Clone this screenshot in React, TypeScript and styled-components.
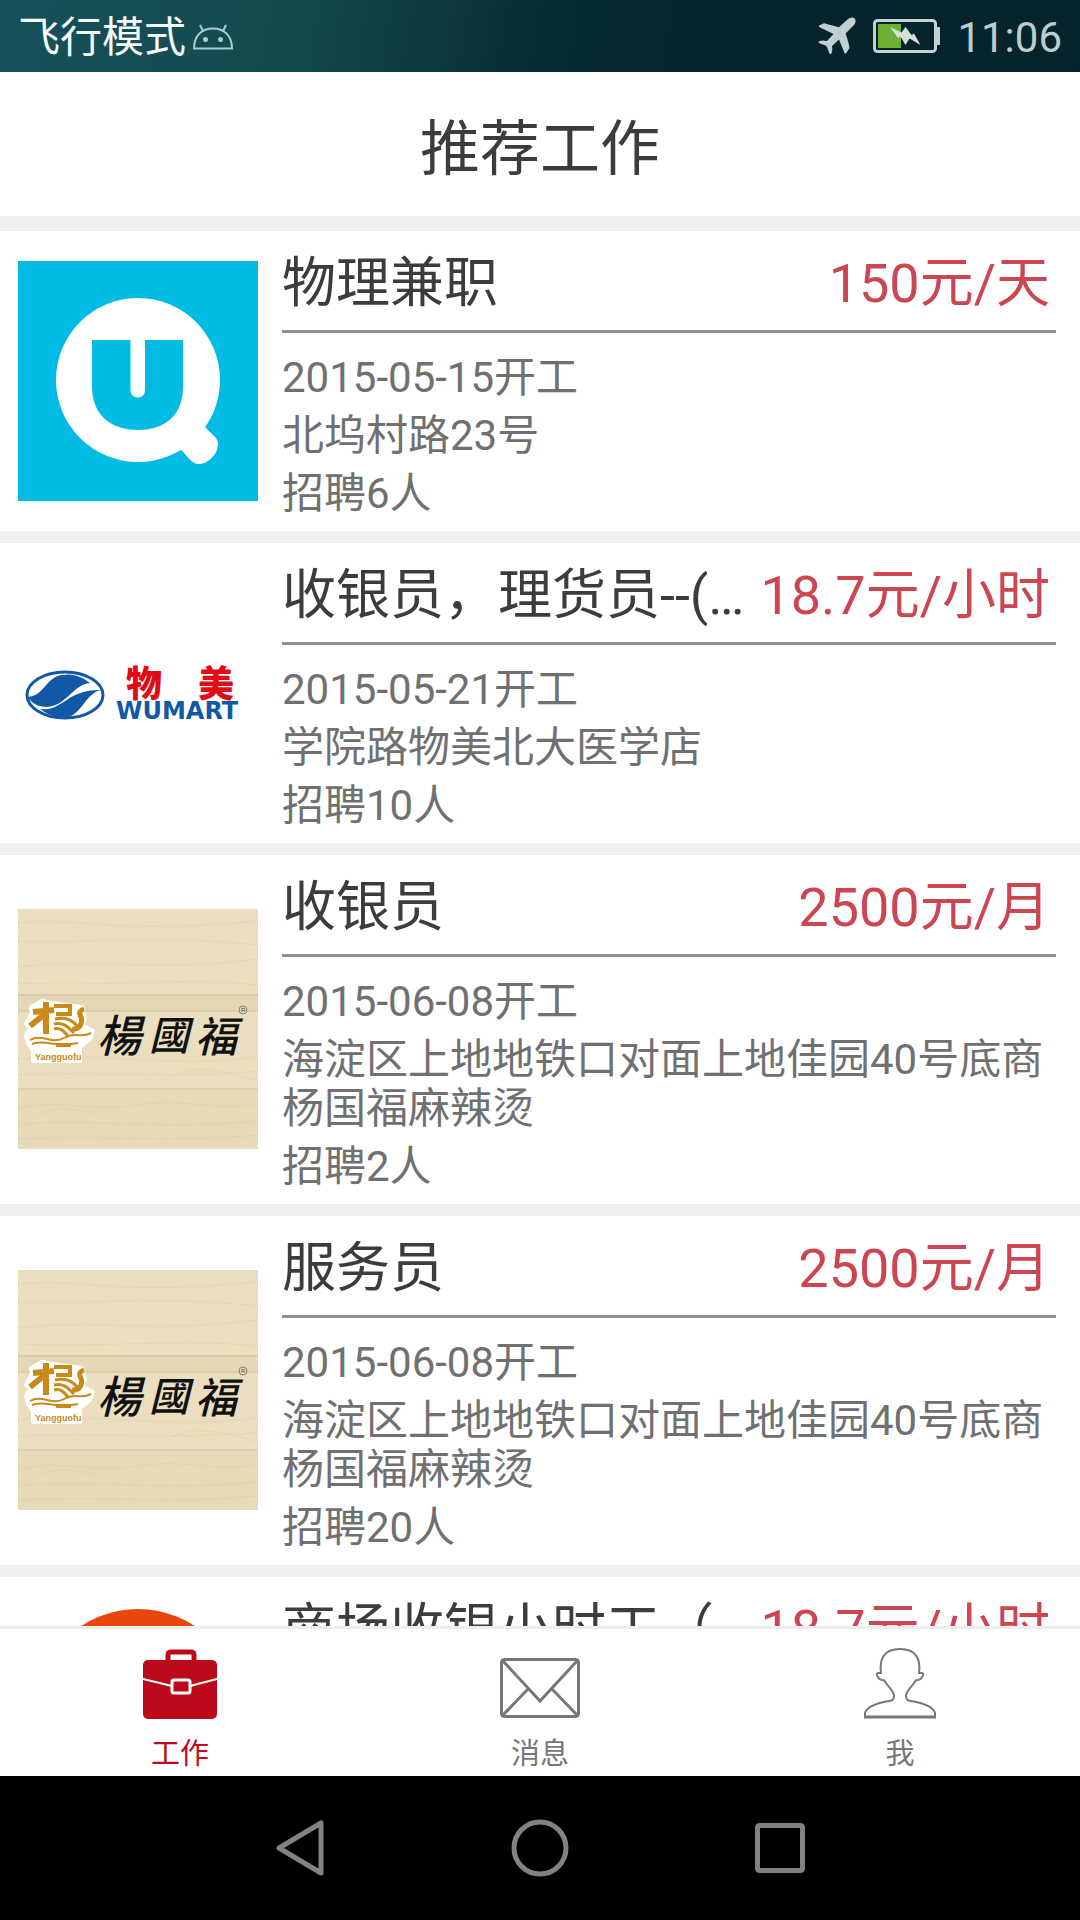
import React from "react";
import styled, { createGlobalStyle } from "styled-components";

const GlobalStyle = createGlobalStyle`
  * { box-sizing: border-box; }
  html, body, #root { height: 100%; }
  body {
    margin: 0;
    background: #fff;
    font-family: Roboto, "Noto Sans CJK SC", sans-serif;
    color: #444;
  }
  h1, h2, p, ul { margin: 0; padding: 0; font-weight: 400; }
  button { border: 0; padding: 0; background: none; font: inherit; color: inherit; cursor: pointer; }
  a { color: inherit; text-decoration: none; }
  svg { display: block; flex: none; }
`;

const Screen = styled.div`
  height: 100vh;
  display: flex;
  flex-direction: column;
`;

const StatusBar = styled.div`
  flex: none;
  height: 72px;
  padding: 0 18px;
  display: flex;
  align-items: center;
  justify-content: space-between;
  font-size: 42px;
  line-height: 48px;
  background: linear-gradient(100deg, #175059 0%, #134b4f 25%, #0e3f44 36%, #082e36 48%, #05242b 65%, #04232b 100%);
`;

const StatusGroup = styled.div<{ $gap: number }>`
  display: flex;
  align-items: center;
  gap: ${(p) => p.$gap}px;
`;

const StatusText = styled.span<{ $color: string }>`
  padding-top: 4px;
  color: ${(p) => p.$color};
`;

const Header = styled.header`
  flex: none;
  height: 159px;
  padding-top: 11px;
  border-bottom: 15px solid #efefef;
  display: flex;
  align-items: center;
  justify-content: center;
`;

const PageTitle = styled.h1`
  font-size: 60px;
  line-height: 72px;
  color: #3c3c3c;
`;

const JobList = styled.ul`
  flex: 1;
  min-height: 0;
  overflow: hidden;
  list-style: none;
`;

const JobItem = styled.li`
  border-bottom: 12px solid #efefef;
`;

const JobCard = styled.a`
  display: flex;
  align-items: center;
  gap: 24px;
  padding: 0 24px 13px 18px;
`;

const Thumb = styled.div`
  flex: none;
  width: 240px;
  height: 240px;
  margin-top: 12px;
`;

const JobBody = styled.div`
  flex: 1;
  min-width: 0;
`;

const JobHead = styled.div`
  height: 102px;
  padding: 7px 6px 0 0;
  border-bottom: 3px solid #919191;
  display: flex;
  align-items: center;
  gap: 8px;
  font-size: 54px;
  line-height: 64px;
`;

const JobName = styled.h2`
  flex: 1;
  min-width: 0;
  font-size: 54px;
  overflow: hidden;
  white-space: nowrap;
  text-overflow: ellipsis;
  color: #3c3c3c;
`;

const Wage = styled.span`
  flex: none;
  color: #cc4652;
`;

const JobDetails = styled.div`
  padding-top: 20px;
  display: flex;
  flex-direction: column;
  gap: 9px;
  font-size: 42px;
  line-height: 49px;
  color: #707070;

  p { min-height: 49px; }
`;

const TabBar = styled.nav`
  flex: none;
  height: 150px;
  border-top: 3px solid #ededed;
  display: flex;
  background: #fff;
`;

const Tab = styled.button<{ $active?: boolean }>`
  flex: 1;
  display: flex;
  flex-direction: column;
  align-items: center;
  justify-content: flex-end;
  gap: 16px;
  padding-bottom: 4px;
  font-size: 29px;
  line-height: 36px;
  color: ${(p) => (p.$active ? "#bb0a1a" : "#777")};
`;

const SystemNav = styled.nav`
  flex: none;
  height: 144px;
  display: flex;
  justify-content: center;
  gap: 180px;
  background: #000;
`;

const SystemKey = styled.button`
  display: flex;
  align-items: center;
`;

const AndroidIcon = () => (
  <svg width="42" height="30" viewBox="0 0 42 30" fill="none" stroke="#a5cfd2" strokeWidth="2">
    <path d="M2 27.500C2 14.500 10 7.500 21 7.500S40 14.500 40 27.500Z" />
    <path d="M8 4l3 6M34 4l-3 6" />
    <circle cx="13.500" cy="18.500" r="2.500" fill="#a5cfd2" stroke="none" />
    <circle cx="28.500" cy="18.500" r="2.500" fill="#a5cfd2" stroke="none" />
  </svg>
);

const PlaneIcon = () => (
  <svg width="38" height="38" viewBox="0 0 38 38" fill="#c3d0d3">
    <path d="M36.500 1.200C38.200 3 37.800 5.800 36 8L27.500 16.500C29 20.500 31 27 31.500 31L28 36.500L26.700 36.500L21 22.500L14 29L14.300 33L13.300 37L11.500 36.800L9 30L7.500 28.500L0.800 26L0.500 24.500L4.500 23.500L9 24L15.500 17L1 10L1 8.500L6 6.200L21 10.200L29.500 2.500C31.500 0.500 34.700 -0.200 36.500 1.200Z" />
  </svg>
);

const BatteryIcon = () => (
  <svg width="67" height="34" viewBox="0 0 67 34">
    <rect x="1.500" y="1.500" width="61" height="31" rx="3" fill="none" stroke="#c3d0d3" strokeWidth="3" />
    <rect x="63" y="8" width="4" height="18" rx="1" fill="#c3d0d3" />
    <rect x="5" y="5" width="23" height="24" fill="#6cb035" />
    <path d="M17 8L28.500 13.500L32.500 8L38.500 16L41 14.500L47.500 26L36.500 19.500L32.500 26L27.500 17.500L25 19Z" fill="#d5dfd9" />
  </svg>
);

const QLogo = () => (
  <svg width="240" height="240" viewBox="0 0 240 240">
    <rect width="240" height="240" fill="#00bce4" />
    <circle cx="120" cy="119" r="82" fill="#fff" />
    <path d="M150 178L176 155L198 177C205 187 192 204 180 203C176 203 172 199 166 192L150 175Z" fill="#fff" />
    <path d="M74 79H165V126C165 153 148 169 120 169C92 169 74 153 74 126Z" fill="#00bce4" />
    <path d="M112.500 78H127V129C127 139 112.500 139 112.500 129Z" fill="#fff" />
  </svg>
);

const WumartLogo = () => (
  <svg width="240" height="240" viewBox="0 0 240 240">
    <ellipse cx="47" cy="122" rx="38" ry="23" fill="#fff" stroke="#1158a6" strokeWidth="3" />
    <path d="M10 124C26 123 28 104 44 102C56 100 64 104 72 110C54 112 50 132 29 134C20 134 13 130 10 124Z" fill="#1158a6" />
    <path d="M84 117C68 119 64 141 50 144C40 146 28 141 22 136C45 139 48 116 84 117Z" fill="#1158a6" />
    <g fontSize="36" fontWeight="900" fontFamily="'Noto Sans CJK SC', sans-serif" fill="#e20a17">
      <text x="108" y="124">物</text>
      <text x="180" y="124">美</text>
    </g>
    <text x="98" y="146" fontSize="24" fontWeight="900" fontFamily="'DejaVu Sans', sans-serif" fill="#1158a6">WUMART</text>
  </svg>
);

const YangLogo = () => (
  <svg width="240" height="240" viewBox="0 0 240 240">
    <rect width="240" height="240" fill="#eadebf" />
    <rect y="85" width="240" height="17" fill="#e5d7b5" />
    <rect y="180" width="240" height="60" fill="#e7dab8" />
    <g fill="none" stroke="#dccda8" strokeWidth="1">
      <path d="M0 86H240M0 102H240M0 180H240" stroke="#d3c39c" />
      <path d="M0 14C70 8 90 26 240 12M0 32C60 36 120 24 240 36M0 58C80 48 130 64 240 50M0 74C90 78 160 68 240 76" opacity="0.500" />
      <path d="M0 150C80 142 150 160 240 148M0 166C60 162 170 170 240 162M150 170C170 155 200 160 240 172" opacity="0.500" />
      <path d="M0 200C40 188 70 204 120 196S200 204 240 194M0 216C60 208 140 222 240 212M20 206C40 196 60 200 80 206M0 230C80 226 160 234 240 226" opacity="0.600" />
    </g>
    <path d="M24 92L34 94L64 98L67 110L64 116L75 122L72 130L62 138L62 152H15V141L10 134L8 126L13 118L8 115L14 104L13 98Z" fill="#fff" stroke="#fff" strokeWidth="4" strokeLinejoin="round" />
    <g fill="none" stroke="#c98a1a">
      <path d="M15 103L36 101M28 93V125M27 105L12 117" strokeWidth="6" />
      <path d="M36 97H52V105H38" strokeWidth="4" />
      <path d="M54 120C62 121 66 113 62 106C61 103 63 101 66 100" strokeWidth="5" />
      <path d="M37 110C46 108 54 110 60 118M36 115C46 113 50 118 56 124M36 120C42 118 46 122 50 127" strokeWidth="3" />
      <path d="M12 131C24 124 34 136 46 129S62 130 73 124M14 135C28 130 38 139 60 134" strokeWidth="2" />
      <path d="M38 136H53" strokeWidth="4" />
    </g>
    <text x="17" y="151" fontSize="9" fontWeight="700" fontFamily="'Liberation Sans', sans-serif" fill="#c98a1a">Yangguofu</text>
    <g fontFamily="'Noto Sans CJK TC', sans-serif" fontWeight="500" fontStyle="italic" fill="#111">
      <text x="79" y="143" fontSize="44">楊</text>
      <text x="131" y="141" fontSize="40">國</text>
      <text x="177" y="143" fontSize="42">福</text>
    </g>
    <circle cx="225" cy="101" r="4" fill="none" stroke="#8a8069" />
    <text x="223" y="103" fontSize="6" fontFamily="'Liberation Sans', sans-serif" fill="#5a523f">R</text>
  </svg>
);

const OrangeLogo = () => (
  <svg width="240" height="240" viewBox="0 0 240 240">
    <circle cx="120" cy="105" r="103" fill="#e94709" />
  </svg>
);

const BriefcaseIcon = () => (
  <svg width="74" height="72" viewBox="0 0 74 72">
    <path d="M25 14V7Q25 4 28 4H48Q51 4 51 7V14" fill="none" stroke="#bb0a1a" strokeWidth="5" />
    <rect y="12" width="74" height="59" rx="5" fill="#bb0a1a" />
    <path d="M0 31L29 38M47 38L74 31" stroke="#fff" strokeWidth="2" />
    <rect x="29" y="32" width="18" height="13" rx="2" fill="none" stroke="#fff" strokeWidth="3" />
  </svg>
);

const MailIcon = () => (
  <svg width="80" height="72" viewBox="0 0 80 72" fill="none" stroke="#777" strokeWidth="3">
    <rect x="1.500" y="11.500" width="77" height="57" rx="3" />
    <path d="M3 13L40 53L77 13M3 67L28 41M77 67L52 41" />
  </svg>
);

const PersonIcon = () => (
  <svg width="72" height="72" viewBox="0 0 72 72" fill="none" stroke="#777" strokeWidth="2">
    <path d="M1 69V65C2 60 12 55 22 53.500C28 53 30 52 30 48C30 43 26 41 22 35C20 32 20 32 18 32C14 31 11 26 14 25L17 25C15 11 20 1 36 1S57 11 55 25L58 25C61 26 58 31 54 32C52 32 52 32 50 35C46 41 42 43 42 48C42 52 44 53 50 53.500C60 55 70 60 71 65V69Z" />
    <path d="M0 69H72" strokeWidth="3" />
  </svg>
);

const jobs = [
  { name: "物理兼职", wage: "150元/天", start: "2015-05-15开工", place: "北坞村路23号", hiring: "招聘6人", Logo: QLogo },
  { name: "收银员，理货员--(…", wage: "18.7元/小时", start: "2015-05-21开工", place: "学院路物美北大医学店", hiring: "招聘10人", Logo: WumartLogo },
  { name: "收银员", wage: "2500元/月", start: "2015-06-08开工", place: "海淀区上地地铁口对面上地佳园40号底商杨国福麻辣烫", hiring: "招聘2人", Logo: YangLogo },
  { name: "服务员", wage: "2500元/月", start: "2015-06-08开工", place: "海淀区上地地铁口对面上地佳园40号底商杨国福麻辣烫", hiring: "招聘20人", Logo: YangLogo },
  { name: "商场收银小时工（", wage: "18.7元/小时", start: "", place: "", hiring: "", Logo: OrangeLogo },
];

export default function App() {
  return (
    <Screen lang="zh-CN">
      <GlobalStyle />
      <StatusBar>
        <StatusGroup $gap={6}>
          <StatusText $color="#f4fafa">飞行模式</StatusText>
          <AndroidIcon />
        </StatusGroup>
        <StatusGroup $gap={17}>
          <PlaneIcon />
          <BatteryIcon />
          <StatusText $color="#b9cdd2">11:06</StatusText>
        </StatusGroup>
      </StatusBar>
      <Header>
        <PageTitle>推荐工作</PageTitle>
      </Header>
      <JobList>
        {jobs.map(({ name, wage, start, place, hiring, Logo }, i) => (
          <JobItem key={i}>
            <JobCard href="#">
              <Thumb>
                <Logo />
              </Thumb>
              <JobBody>
                <JobHead>
                  <JobName>{name}</JobName>
                  <Wage>{wage}</Wage>
                </JobHead>
                <JobDetails>
                  <p>{start}</p>
                  <p>{place}</p>
                  <p>{hiring}</p>
                </JobDetails>
              </JobBody>
            </JobCard>
          </JobItem>
        ))}
      </JobList>
      <TabBar>
        <Tab type="button" $active>
          <BriefcaseIcon />
          工作
        </Tab>
        <Tab type="button">
          <MailIcon />
          消息
        </Tab>
        <Tab type="button">
          <PersonIcon />
          我
        </Tab>
      </TabBar>
      <SystemNav>
        <SystemKey type="button" aria-label="返回">
          <svg width="60" height="60" viewBox="0 0 60 60" fill="none" stroke="#828282" strokeWidth="5" strokeLinejoin="round">
            <path d="M9 30L51 5V55Z" />
          </svg>
        </SystemKey>
        <SystemKey type="button" aria-label="主页">
          <svg width="60" height="60" viewBox="0 0 60 60" fill="none" stroke="#828282" strokeWidth="5">
            <circle cx="30" cy="30" r="26" />
          </svg>
        </SystemKey>
        <SystemKey type="button" aria-label="最近任务">
          <svg width="60" height="60" viewBox="0 0 60 60" fill="none" stroke="#828282" strokeWidth="5">
            <rect x="7.500" y="7.500" width="45" height="45" rx="2" />
          </svg>
        </SystemKey>
      </SystemNav>
    </Screen>
  );
}
